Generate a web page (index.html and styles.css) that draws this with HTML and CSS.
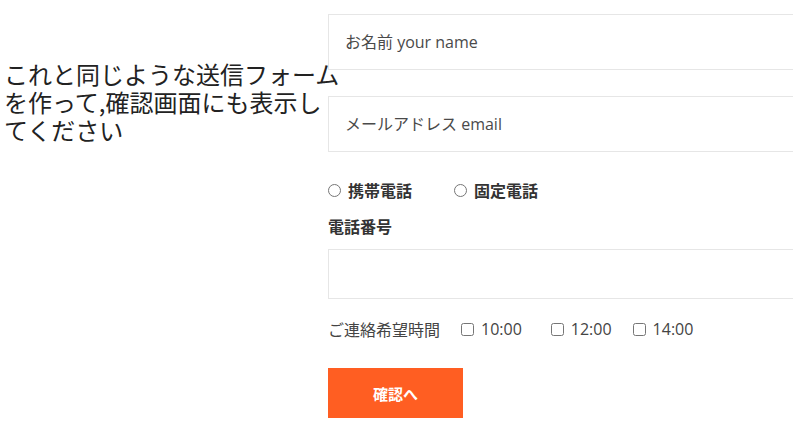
FILE: index.html
```html
<!DOCTYPE html>
<html lang="ja">
<head>
<meta charset="utf-8">
<link rel="stylesheet" href="styles.css">
</head>
<body>
<div class="page">
  <div class="intro">
    <p class="intro-text">これと同じような送信フォームを作って,確認画面にも表示してください</p>
  </div>
  <form class="form">
    <input class="field" type="text" placeholder="お名前 your name">
    <input class="field field-second" type="email" placeholder="メールアドレス email">
    <div class="radios">
      <label class="choice choice-radio"><input type="radio" name="tel"><span>携帯電話</span></label>
      <label class="choice choice-radio"><input type="radio" name="tel"><span>固定電話</span></label>
    </div>
    <div class="label">電話番号</div>
    <input class="field field-tel" type="tel">
    <div class="times">
      <span class="times-label">ご連絡希望時間</span>
      <label class="choice time-1"><input type="checkbox"><span>10:00</span></label>
      <label class="choice time-2"><input type="checkbox"><span>12:00</span></label>
      <label class="choice time-3"><input type="checkbox"><span>14:00</span></label>
    </div>
    <button class="submit" type="button">確認へ</button>
  </form>
</div>
</body>
</html>
```

FILE: styles.css
```css
html, body {
  margin: 0;
  padding: 0;
  background: #ffffff;
  overflow: hidden;
}

.page {
  width: 793px;
  height: 427px;
  display: grid;
  grid-template-columns: 328px 560px;
  overflow: hidden;
  font-family: "Open Sans", "Noto Sans CJK JP", sans-serif;
  color: #333333;
}

.intro {
  padding-top: 60px;
  padding-left: 4px;
  position: relative;
  z-index: 1;
}

.intro-text {
  margin: 0;
  width: 340px;
  font-family: "Noto Sans CJK JP", sans-serif;
  font-size: 24px;
  line-height: 28px;
  color: #222222;
}

.form {
  padding-top: 14px;
  display: flex;
  flex-direction: column;
  align-items: flex-start;
}

.field {
  box-sizing: border-box;
  width: 560px;
  height: 56px;
  margin: 0;
  border: 1px solid #e6e6e6;
  background: #ffffff;
  padding: 0 16px;
  font-family: "Open Sans", "Noto Sans CJK JP", sans-serif;
  font-size: 16px;
  color: #444444;
  outline: none;
}

.field::placeholder {
  color: #4a4a4a;
  opacity: 1;
}

.field-second {
  margin-top: 26px;
}

.radios {
  margin-top: 26px;
  height: 24px;
  display: flex;
  align-items: center;
  gap: 42px;
}

.choice {
  display: flex;
  align-items: center;
  gap: 7px;
  font-size: 16px;
  line-height: 24px;
  height: 24px;
}

.choice input {
  margin: 0;
  width: 13px;
  height: 13px;
}

.choice-radio span {
  font-family: "Noto Sans CJK JP", sans-serif;
  font-weight: 700;
  font-size: 16px;
  color: #333333;
}

.label {
  margin-top: 12px;
  height: 24px;
  line-height: 24px;
  font-family: "Noto Sans CJK JP", sans-serif;
  font-weight: 700;
  font-size: 16px;
  color: #333333;
}

.field-tel {
  margin-top: 11px;
  height: 50px;
}

.times {
  margin-top: 18px;
  height: 24px;
  display: flex;
  align-items: center;
  font-size: 16px;
  color: #444444;
}

.times-label {
  font-family: "Noto Sans CJK JP", sans-serif;
  margin-right: 21px;
}

.time-1 {
  margin-right: 29px;
}

.time-2 {
  margin-right: 21px;
}

.submit {
  margin-top: 27px;
  width: 135px;
  height: 50px;
  border: none;
  background: #ff5e22;
  color: #ffffff;
  font-family: "Noto Sans CJK JP", sans-serif;
  font-weight: 700;
  font-size: 15px;
  cursor: pointer;
}
```
